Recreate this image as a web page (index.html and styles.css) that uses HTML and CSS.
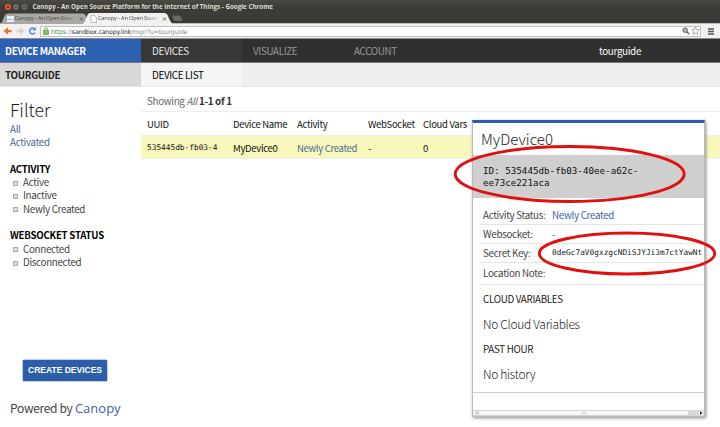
FILE: index.html
```html
<!DOCTYPE html>
<html lang="en">
<head>
<meta charset="utf-8">
<title>Canopy - An Open Source Platform for the Internet of Things</title>
<link rel="stylesheet" href="styles.css">
</head>
<body>
<header class="chrome">
  <div class="titlebar">
    <svg class="wm" width="28" height="10" viewBox="0 0 28 10"><circle cx="4" cy="5" r="3.1" fill="#e8552d"/><path d="M2.8 3.800l2.400 2.400M5.200 3.800L2.800 6.200" stroke="#6b2411" stroke-width=".9"/><circle cx="12" cy="5" r="2.800" fill="#77756d"/><path d="M10.600 5h2.800" stroke="#3c3b37"/><circle cx="20.500" cy="5" r="2.800" fill="#77756d"/><path d="M19.300 4h2.400v2h-2.400z" fill="none" stroke="#3c3b37" stroke-width=".7"/></svg>
    <span class="wintitle">Canopy - An Open Source Platform for the Internet of Things - Google Chrome</span>
  </div>
  <div class="tabs">
    <svg class="tabshapes" width="190" height="11" viewBox="0 0 190 11"><path d="M1 11L5 2Q6 .5 8 .5H83Q85 .5 86 3L89 11z" fill="#aaa8a2"/><path d="M172 2.500h7q1.500 0 2 1.500l1.500 4h-8z" fill="#686761"/><path d="M83 11Q85 9 87 3Q88 0 90 0H164Q167 0 168 3Q170 9 173 11z" fill="#f2f1f0"/><path d="M7 3h7v6H7z" fill="#e8f2fb"/><path d="M7 6h7v1H7z" fill="#90bce8"/><path d="M91 2.500h3.500l2 2v5H91z" fill="#fff" stroke="#999" stroke-width=".6"/><path d="M80 4.500l3 3m0-3l-3 3M163 4.500l3 3m0-3l-3 3" stroke="#555" stroke-width=".8"/></svg>
    <span class="tab tab-a">Canopy - An Open Sourc</span>
    <span class="tab tab-b">Canopy - An Open Sourc</span>
  </div>
  <div class="toolbar">
    <svg class="navicons" width="40" height="15" viewBox="0 0 40 15"><path d="M3.500 7L8 3.300V6h3.500v2.200H8v2.600z" fill="#ee7428"/><path d="M24.500 7L20 3.300V6h-3.500v2.200H20v2.600z" fill="#d4d3d2"/><path d="M34.800 5.200A2.900 2.900 0 1 0 35 8.600" fill="none" stroke="#5590d5" stroke-width="1.600"/><path d="M35.800 3v3.500h-3.500z" fill="#5590d5"/></svg>
    <div class="omnibox">
      <svg width="10" height="10" viewBox="0 0 10 10"><path d="M3.400 5V3.500a1.600 1.600 0 0 1 3.200 0V5" fill="none" stroke="#69a84c"/><path d="M2.500 4.500h5v4h-5z" fill="#85bd69" stroke="#5a9c3e" stroke-width=".7"/></svg>
      <span class="url"><b>https</b>://<i>sandbox.canopy.link</i>/mgr/?u=tourguide</span>
      <svg class="urlicons" width="18" height="10" viewBox="0 0 18 10"><circle cx="3.200" cy="4.200" r="2.200" fill="#bbb" stroke="#555"/><path d="M5 6l2.200 2.200" stroke="#555" stroke-width="1.300"/><path d="M13.500 1l1.100 2.600 2.700.2-2 1.900.6 2.800-2.400-1.500-2.400 1.500.6-2.800-2-1.900 2.700-.2z" fill="#fff" stroke="#888" stroke-width=".7"/></svg>
    </div>
    <svg class="menuicon" width="6" height="7" viewBox="0 0 6 7"><path d="M0 1h6M0 3.500h6M0 6h6" stroke="#555" stroke-width="1.500"/></svg>
  </div>
</header>
<nav class="mainnav">
  <div class="brand">DEVICE MANAGER</div>
  <div class="item active">DEVICES</div>
  <div class="item">VISUALIZE</div>
  <div class="item">ACCOUNT</div>
  <div class="user">tourguide</div>
</nav>
<nav class="subnav">
  <div class="who">TOURGUIDE</div>
  <div class="list">DEVICE LIST</div>
</nav>
<div class="page">
  <aside class="sidebar">
    <h2>Filter</h2>
    <a class="link">All</a>
    <a class="link">Activated</a>
    <h3>ACTIVITY</h3>
    <label><i class="box"></i>Active</label>
    <label><i class="box"></i>Inactive</label>
    <label><i class="box"></i>Newly Created</label>
    <h3>WEBSOCKET STATUS</h3>
    <label><i class="box"></i>Connected</label>
    <label><i class="box"></i>Disconnected</label>
    <div class="create">CREATE DEVICES</div>
    <div class="powered">Powered by <span>Canopy</span></div>
  </aside>
  <main>
    <p class="showing">Showing <em>All</em> <b>1-1 of 1</b></p>
    <div class="row head"><span>UUID</span><span>Device Name</span><span>Activity</span><span>WebSocket</span><span>Cloud Vars</span></div>
    <div class="row data"><code>535445db-fb03-4</code><span>MyDevice0</span><span class="new">Newly Created</span><span>-</span><span>0</span></div>
  </main>
</div>
<section class="panel">
  <h1>MyDevice0</h1>
  <div class="id">ID: 535445db-fb03-40ee-a62c-<br>ee73ce221aca</div>
  <div class="props">
    <div class="prop"><span>Activity Status:</span><span class="val new">Newly Created</span></div>
    <div class="prop"><span>Websocket:</span><span class="val">-</span></div>
    <div class="prop"><span>Secret Key:</span><code>0deGc7aV0gxzgcNDiSJYJi3m7ctYawNt</code></div>
    <div class="prop last"><span>Location Note:</span></div>
  </div>
  <h4>CLOUD VARIABLES</h4>
  <p class="none">No Cloud Variables</p>
  <h4>PAST HOUR</h4>
  <p class="none">No history</p>
  <div class="foot"></div>
  <svg class="scroll" width="231" height="6" viewBox="0 0 231 6"><path d="M0 0h231v6H0z" fill="#d8d8d8"/><path d="M0 .5h5v5H0zM5.500.5h210v5H5.500zM225.500.5h5.500v5H225.500z" fill="#f7f7f7" stroke="#c8c8c8" stroke-width=".6"/><path d="M4 1.500v3L2 3z" fill="#aaa"/><path d="M227 1.200v3.600L229.500 3z" fill="#111"/><path d="M109.500 2v2m1.500-2v2m1.500-2v2" stroke="#aaa" stroke-width=".6"/></svg>
</section>
<svg class="marks" width="720" height="427" viewBox="0 0 720 427"><g fill="none" stroke="#e01010" stroke-width="2.900"><ellipse cx="569.700" cy="174" rx="114.500" ry="27.500"/><ellipse cx="627" cy="253.500" rx="87.700" ry="20.500"/></g></svg>
</body>
</html>
```
FILE: styles.css
```css
* { box-sizing: border-box; }
body { margin: 0; width: 720px; height: 427px; overflow: hidden; position: relative; background: #fff; color: #222; font: 9.800px/14px "Noto Sans CJK JP", sans-serif; letter-spacing: -.31px; white-space: nowrap; }
h1, h2, h3, h4, p { margin: 0; font-weight: 400; }
.chrome { height: 39px; background: linear-gradient(#4a4943, #3c3b37 8px); letter-spacing: 0; }
.titlebar { height: 13px; display: flex; align-items: center; padding-left: 4px; }
.wintitle { font: bold 6.250px/12px "Open Sans", sans-serif; color: #dfdbd2; margin-left: .5px; }
.tabs { height: 11px; position: relative; border-bottom: 1px solid #bbb; }
.tabshapes { display: block; }
.tab { position: absolute; top: 1px; font: 5.500px/9px "Open Sans", sans-serif; letter-spacing: -.1px; color: #444; -webkit-mask-image: linear-gradient(90deg, #000 78%, rgba(0,0,0,.25)); }
.tab-a { left: 15px; }
.tab-b { left: 98px; }
.toolbar { height: 15px; background: #f2f1f0; display: flex; align-items: center; border-bottom: 1px solid #8c8c8c; }
.omnibox { width: 661px; height: 11px; border: 1px solid #c0c0bf; background: #fff; display: flex; align-items: center; }
.url { font: 6.200px/9px "DejaVu Sans", sans-serif; letter-spacing: -.17px; color: #888; }
.url b { color: #3a9427; font-weight: 400; }
.url i { color: #222; font-style: normal; }
.urlicons { margin-left: auto; }
.menuicon { margin-left: 7px; }
.navicons { flex: none; }
.mainnav { height: 24px; display: flex; background: #303030; color: #999; line-height: 24px; border-bottom: 1px solid #777; }
.brand { width: 141px; padding-left: 5px; background: #2d5fb2; color: #fff; font-weight: 700; }
.item { width: 101px; padding-left: 11px; }
.active { background: #383838; color: #e8e8e8; }
.user { margin-left: 155px; color: #fff; }
.subnav { height: 24px; display: flex; background: #efefef; line-height: 24px; border-bottom: 1px solid #e4e4e4; }
.who { width: 141px; padding-left: 5px; background: #d8d8d8; font-weight: 700; }
.list { width: 101px; padding-left: 11px; background: #f5f5f5; color: #000; }
.page { display: flex; }
.sidebar { width: 141px; padding: 12px 0 0 10px; height: 340px; color: #444; }
.sidebar h2 { font-size: 17.600px; line-height: 22px; height: 24px; color: #222; font-weight: 300; letter-spacing: 0; }
.link { display: block; line-height: 13.300px; color: #4b689d; }
h3 { font-size: 9.600px; letter-spacing: -.2px; font-weight: 700; color: #000; line-height: 13.300px; margin-top: 13.300px; }
label { display: flex; align-items: center; line-height: 13.300px; height: 13.300px; }
.box { width: 5px; height: 5px; border: 1px solid #aaa; background: #ddd; margin: 1px 5px 0 3px; }
.create { margin: 91px 0 0 13px; width: 84px; height: 21px; border-radius: 1px; background: #2c5fa8; box-shadow: 0 0 0 .5px #7f9ed0; color: #fff; font: bold 8.500px/21px "Liberation Sans", sans-serif; letter-spacing: 0; text-align: center; }
.powered { margin-top: 18px; font-size: 12px; line-height: 18px; }
.powered span { font: 500 13px/18px "Open Sans", sans-serif; letter-spacing: 0; color: #3d62a5; }
main { flex: 1; padding-top: 7px; }
.showing { padding-left: 6px; height: 17px; line-height: 15px; color: #666; }
.showing b { color: #333; }
.row { display: grid; grid-template-columns: 86px 64px 71px 55px 1fr; padding-left: 6px; height: 24px; line-height: 24px; border-top: 1px solid #eee; color: #111; font-size: 9.500px; }
.data { background: #f8f8bd; border-bottom: 1px solid #eee; }
code { font-family: "DejaVu Sans Mono", monospace; font-size: 7.800px; letter-spacing: 0; }
.new { color: #3c64aa; }
.data .new { color: #4a6c91; }
.panel { position: absolute; left: 472px; top: 120px; width: 233px; height: 297px; background: #fff; border: 1px solid #bbb; border-top: 3px solid #2f59b0; box-shadow: 1px 1px 3px #888; overflow: hidden; }
.panel h1 { height: 32px; padding-left: 8px; font-size: 15px; line-height: 32px; font-weight: 300; color: #222; letter-spacing: 0; }
.id { height: 43px; padding: 10px 0 0 10px; background: #cfcfcf; font: 9.230px/12px "DejaVu Sans Mono", monospace; color: #111; letter-spacing: 0; }
.props { margin-left: 7px; padding-top: 8px; color: #444; }
.prop { display: flex; height: 19px; line-height: 18px; padding-left: 3px; border-bottom: 1px solid #e4e4e4; }
.prop span:first-child { width: 69px; }
.prop.last { height: 22px; line-height: 21px; }
.prop code { color: #222; }
h4 { padding-left: 10px; line-height: 14px; color: #222; margin-top: 7px; }
.none + h4 { margin-top: 8px; }
.none { padding-left: 10px; font-size: 12px; line-height: 20px; font-weight: 300; color: #222; margin-top: 8px; }
.foot { border-bottom: 1px solid #ccc; height: 9px; }
.scroll { position: absolute; left: 0; bottom: 0; }
.marks { position: absolute; left: 0; top: 0; }
```
